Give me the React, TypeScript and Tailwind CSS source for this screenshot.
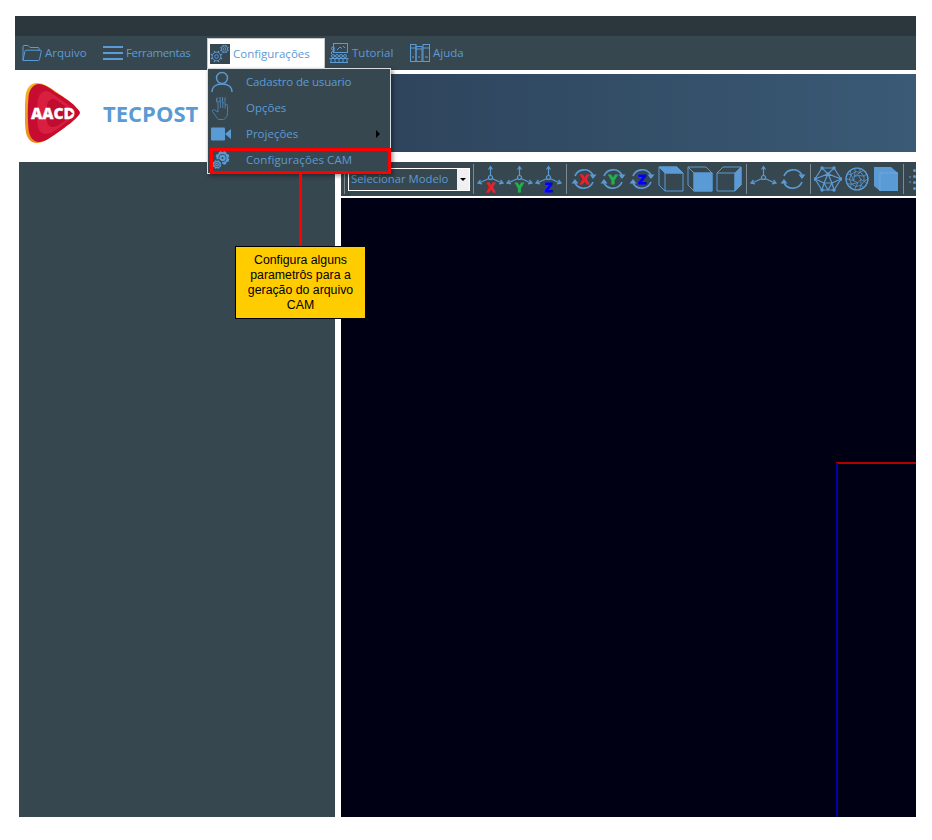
import React from 'react'

const BLUE = '#5b9bd5'
const PANEL = '#37474f'

function FolderIcon() {
  return (
    <svg width="20" height="18" viewBox="0 0 20 18" fill="none" stroke={BLUE} strokeWidth="1">
      <path d="M1 16.500V2.500q0-1 1-1h4l2 2h8q1 0 1 1v2" />
      <path d="M1 16.500l2-9.500q.2-.8 1-.8h14.500q1 0 .8 1l-1.800 8.300q-.2 1-1 1z" />
    </svg>
  )
}

function HamburgerIcon() {
  return (
    <svg width="20" height="16" viewBox="0 0 20 16" fill={BLUE}>
      <rect y="1" width="20" height="2" />
      <rect y="7" width="20" height="2" />
      <rect y="13" width="20" height="2" />
    </svg>
  )
}

function Gear({ cx, cy, r, sw = 1, fill = 'none', toothW = 1.6 }: { cx: number; cy: number; r: number; sw?: number; fill?: string; toothW?: number }) {
  const teeth = []
  for (let i = 0; i < 8; i++) {
    const a = (i * Math.PI) / 4 + Math.PI / 8
    teeth.push(
      <line key={i} x1={cx + Math.cos(a) * r} y1={cy + Math.sin(a) * r} x2={cx + Math.cos(a) * r * 1.38} y2={cy + Math.sin(a) * r * 1.38} stroke={BLUE} strokeWidth={toothW} />,
    )
  }
  return (
    <g>
      {teeth}
      <circle cx={cx} cy={cy} r={r} fill={fill} stroke={BLUE} strokeWidth={sw} />
      <circle cx={cx} cy={cy} r={r * 0.42} fill="none" stroke={BLUE} strokeWidth={sw} />
    </g>
  )
}

function TutorialIcon() {
  return (
    <svg width="20" height="20" viewBox="0 0 20 20" fill="none" stroke={BLUE} strokeWidth="1">
      <rect x="4.500" y="0.500" width="14" height="9" />
      <path d="M8 7l3-3 2 1.500M14 3l2 2" />
      <circle cx="4" cy="5.500" r="1.500" />
      <path d="M2.500 11V9l3.500-1.500M0.500 15.500h19M1 19.500h18" />
      <circle cx="4" cy="13" r="1.500" />
      <circle cx="8" cy="13" r="1.500" />
      <circle cx="12" cy="13" r="1.500" />
      <circle cx="16" cy="13" r="1.500" />
      <path d="M2 15.500v4M6 15.500v4M10 15.500v4M14 15.500v4M18 15.500v4" />
    </svg>
  )
}

function BooksIcon() {
  return (
    <svg width="20" height="18" viewBox="0 0 20 18" fill="none" stroke={BLUE} strokeWidth="1">
      <rect x="0.500" y="0.500" width="5.500" height="17" />
      <rect x="6" y="2.500" width="6" height="15" />
      <rect x="13" y="0.500" width="6.500" height="17" />
      <path d="M0.500 4h5.500M6 5h6M13 4h6.500M2 13h2M8 13h2M15 13h3" />
    </svg>
  )
}

function MenuItem({ icon, label, className }: { icon: React.ReactNode; label: string; className: string }) {
  return (
    <div className={'flex items-center h-[32px] pb-[2px] ' + className}>
      <div className="shrink-0 flex items-center">{icon}</div>
      <span className="ml-[3px] text-[11.5px] text-[#5b9bd5] whitespace-nowrap">{label}</span>
    </div>
  )
}

function Axes({ letter, color }: { letter?: string; color?: string }) {
  return (
    <svg width="27" height="32" viewBox="0 -2 27 32" fill="none" stroke={BLUE} strokeWidth="1.200">
      <path d="M13.500 11V2M12 13.500L2 18M15 13.500L25 18" />
      <circle cx="13.500" cy="12.500" r="2" />
      <path d="M11.500 4.500l2-3 2 3" />
      <path d="M3.500 15l-2.500 3 4 .8" />
      <path d="M23.500 15l2.500 3-4 .8" />
      {letter && (
        <text x="13.500" y="27" textAnchor="middle" fontSize="12.500" fontWeight="700" fontFamily="Liberation Sans, sans-serif" fill={color} stroke={color} strokeWidth="1.100">
          {letter}
        </text>
      )}
    </svg>
  )
}

function Rotate({ letter, color }: { letter?: string; color?: string }) {
  return (
    <svg width="26" height="26" viewBox="0 0 26 26" fill="none" stroke={BLUE} strokeWidth="1.600">
      <path d="M4 10A10 10 0 0 1 22 9" />
      <path d="M22 16A10 10 0 0 1 4 17" />
      <path d="M18.500 8.500h7l-3.500 4.500z" fill={BLUE} stroke="none" />
      <path d="M0.500 17.500h7L4 13z" fill={BLUE} stroke="none" />
      {letter && (
        <text x="13" y="18" textAnchor="middle" fontSize="13.500" fontWeight="700" fontFamily="Liberation Sans, sans-serif" fill={color} stroke={color} strokeWidth="1.100">
          {letter}
        </text>
      )}
    </svg>
  )
}

function Cube({ variant }: { variant: 'top' | 'front' | 'side' }) {
  if (variant === 'side') {
    return (
      <svg width="26" height="26" viewBox="0 0 26 26" fill="none" stroke={BLUE} strokeWidth="1">
        <path d="M19 7l6-6v18l-6 6z" fill={BLUE} />
        <path d="M1 7h18v18H1zM1 7l6-6h18v18l-6 6" />
      </svg>
    )
  }
  return (
    <svg width="26" height="26" viewBox="0 0 26 26" fill="none" stroke={BLUE} strokeWidth="1">
      {variant === 'top' && <path d="M1 1h18l6 6H7z" fill={BLUE} />}
      {variant === 'front' && <rect x="7" y="7" width="18" height="18" fill={BLUE} />}
      <path d="M1 1h18l6 6v18H7l-6-6z" />
      <path d="M1 1l6 6h18M7 7v18" />
    </svg>
  )
}

function WireMesh() {
  return (
    <svg width="28" height="26" viewBox="0 0 28 26" fill="none" stroke={BLUE} strokeWidth="1.200">
      <path d="M8 2h12l7 11-7 11H8L1 13z" />
      <path d="M8 2l6 6 6-6M1 13l13-5 13 5M1 13l9 4 4-9 4 9 9-4M10 17h8M10 17L8 24M18 17l2 7M10 17l4 7 4-7" />
      {[[8, 2], [20, 2], [27, 13], [20, 24], [8, 24], [1, 13], [14, 8]].map(([x, y], i) => (
        <circle key={i} cx={x} cy={y} r="1.700" fill={BLUE} stroke="none" />
      ))}
    </svg>
  )
}

function Sphere() {
  // rings of points joined to each other, reads as a geodesic ball at this size
  const rings = [
    { r: 11, n: 14, o: 0 },
    { r: 7.5, n: 9, o: 0.3 },
    { r: 3.800, n: 5, o: 0.1 },
  ]
  const pts = rings.map((g) =>
    Array.from({ length: g.n }, (_, i) => {
      const a = g.o + (i * 2 * Math.PI) / g.n
      return [12 + Math.cos(a) * g.r, 12 + Math.sin(a) * g.r]
    }),
  )
  let d = ''
  pts.forEach((ring, k) => {
    ring.forEach((p, i) => {
      const q = ring[(i + 1) % ring.length]
      d += `M${p[0]} ${p[1]}L${q[0]} ${q[1]}`
      if (k < pts.length - 1) {
        const next = pts[k + 1]
        const j = Math.floor((i * next.length) / ring.length)
        d += `M${p[0]} ${p[1]}L${next[j][0]} ${next[j][1]}`
      }
    })
  })
  return (
    <svg width="24" height="24" viewBox="0 0 24 24" fill="none" stroke={BLUE} strokeWidth="0.800">
      <circle cx="12" cy="12" r="11" strokeWidth="1.200" />
      <path d={d} />
    </svg>
  )
}

function SolidCube() {
  return (
    <svg width="26" height="26" viewBox="0 0 26 26" fill={BLUE}>
      <path d="M1 1h17l7 6v18H7l-6-5z" />
      <path d="M7 7h18M7 7v18" stroke="#6ea8dc" strokeWidth="1" fill="none" />
    </svg>
  )
}

function ToolSep() {
  return <div className="w-[1px] h-[30px] bg-[#7d8a90] ml-[3px] mr-[2px] shrink-0" />
}

function Tool({ children }: { children: React.ReactNode }) {
  return <div className="w-[29px] h-[34px] flex items-center justify-center shrink-0">{children}</div>
}

function Logo() {
  return (
    <svg width="56" height="61" viewBox="0 0 56 61">
      <defs>
        <linearGradient id="rim" x1="0" y1="0" x2="0" y2="1">
          <stop offset="0" stopColor="#f5b323" />
          <stop offset="1" stopColor="#ea8a1c" />
        </linearGradient>
      </defs>
      <path d="M12 0C5 0 1 6 .5 14c-1 11-1 22 0 32C1 54 5 60 12 60c5 0 12-4 20-10 10-7 18-13 21-17 2.500-2.500 2.500-4 0-6.500C48 20 40 15 30 8 24 3.500 17 0 12 0z" fill="url(#rim)" />
      <path d="M14 1C8 1 4 7 3.500 14c-1 11-1 22 0 32C4 53 8 59 14 59c5 0 11-4 18-9 10-7 18-13 21-17 2.500-2.500 2.500-4 0-6.500C48 20 40 15 30 9 25 5 19 1 14 1z" fill="#c60c30" />
      <path d="M21 8c-5 0-8 5-8.500 11-.5 8-.5 15 0 22 .5 6 3.500 10 8.500 10 4 0 9-3 14-7 7-5 12-9 14-12 1.500-1.500 1.500-3 0-4.500-3-4-9-8-15-12-4-3-9-7.500-13-7.500z" fill="#d81f3f" />
      <path d="M28 16c-4 0-6 4-6 8-.5 5-.5 9 0 13 0 4 2 7 6 7 3 0 6-2 10-5 4-3 7-5 8-7 1-1 1-2 0-3-2-3-5-5-9-8-3-2-6-5-9-5z" fill="#c00c2e" />
      <text x="28" y="36" textAnchor="middle" fontSize="15.500" fontWeight="800" fontFamily="Open Sans, sans-serif" fill="#fff" stroke="#fff" strokeWidth="0.300">
        AACD
      </text>
      <path d="M43.500 27.500l4.500 3-4.500 3z" fill="#c60c30" />
    </svg>
  )
}

function HandIcon() {
  return (
    <svg width="20" height="25" viewBox="0 0 20 25" fill="none" stroke={BLUE} strokeWidth="0.900" opacity="0.75">
      <path d="M7 16V6.500a1.200 1.200 0 0 1 2.400 0V12m0-5.500a1.200 1.200 0 0 1 2.400 0V12m0-4.500a1.200 1.200 0 0 1 2.400 0V12.500m0-3a1.200 1.200 0 0 1 2.400 0v7c0 4-2.500 7-5 7H9c-2 0-3-1-4-3l-3.500-5c-.8-1.200 1-2.500 2-1.500L7 16" />
      <path d="M6.500 1.500a4 4 0 0 0 0 5M9 1v4M11.500 1v4M14 1.500v4" strokeWidth="1.100" />
    </svg>
  )
}

function DropRow({ icon, label, arrow, textClass }: { icon: React.ReactNode; label: string; arrow?: boolean; textClass?: string }) {
  return (
    <div className="flex items-center h-[26px] relative">
      <div className="w-[38px] pl-[3px] flex items-center shrink-0">{icon}</div>
      <span className={'text-[11.5px] text-[#5b9bd5] whitespace-nowrap ' + (textClass ?? '')}>{label}</span>
      {arrow && <div className="absolute right-[10px] top-[9px] w-0 h-0 border-y-[4px] border-y-transparent border-l-[4px] border-l-black" />}
    </div>
  )
}

export default function App() {
  return (
    <div className="w-[932px] h-[840px] bg-white pt-[16px] pl-[15px] relative overflow-hidden font-['Open_Sans',sans-serif]">
      <div className="w-[901px] h-[801px] flex flex-col">
        <div className="h-[20px] bg-[#2b373c] shrink-0" />
        <div className="h-[34px] bg-[#37474f] shrink-0 flex items-end pl-[7px]">
          <MenuItem className="w-[81px]" icon={<FolderIcon />} label="Arquivo" />
          <MenuItem className="w-[104px] tracking-[-0.35px]" icon={<HamburgerIcon />} label="Ferramentas" />
          <MenuItem
            className="w-[118px] bg-white border-t border-l border-r border-[#c8c8c8] pl-[2px] mr-[4px]"
            label="Configurações"
            icon={
              <div className="w-[20px] h-[20px] bg-[#37474f]">
                <svg width="20" height="20" viewBox="0 0 20 20">
                  <Gear cx={6.500} cy={12.500} r={4.300} sw={0.900} toothW={1.400} />
                  <Gear cx={14.500} cy={5} r={3.200} sw={0.900} toothW={1.400} />
                </svg>
              </div>
            }
          />
          <MenuItem className="w-[81px]" icon={<TutorialIcon />} label="Tutorial" />
          <MenuItem className="" icon={<BooksIcon />} label="Ajuda" />
        </div>

        <div className="h-[92px] shrink-0 flex">
          <div className="w-[192px] shrink-0 flex items-center pl-[10px] pb-[6px]">
            <Logo />
            <span className="ml-[22px] text-[22px] font-bold text-[#5b9bd5] whitespace-nowrap">TECPOST</span>
          </div>
          <div className="flex-1 mt-[4px] h-[78px] bg-gradient-to-r from-[#2a3d54] to-[#3a5a75]" />
        </div>

        <div className="flex-1 flex min-h-0 pl-[4px]">
          <div className="w-[316px] bg-[#37474f] shrink-0" />
          <div className="w-[6px] shrink-0" />
          <div className="flex-1 flex flex-col">
            <div className="h-[34px] bg-[#37474f] shrink-0 flex items-center">
              <div className="w-[1px] h-[30px] bg-[#7d8a90] ml-[3px] mr-[3px] shrink-0" />
              <div className="w-[122px] h-[23px] border border-white flex items-center shrink-0 relative">
                <span className="text-[11.3px] text-[#5b9bd5] pl-[2px] whitespace-nowrap">Selecionar Modelo</span>
                <div className="absolute right-0 top-0 bottom-0 w-[12px] bg-[#f0f0f0] flex items-center justify-center">
                  <div className="w-0 h-0 border-x-[3px] border-x-transparent border-t-[3px] border-t-black" />
                </div>
              </div>
              <ToolSep />
              <Tool><Axes letter="X" color="#ee1c25" /></Tool>
              <Tool><Axes letter="Y" color="#22b14c" /></Tool>
              <Tool><Axes letter="Z" color="#0000ff" /></Tool>
              <ToolSep />
              <Tool><Rotate letter="X" color="#ee1c25" /></Tool>
              <Tool><Rotate letter="Y" color="#22b14c" /></Tool>
              <Tool><Rotate letter="Z" color="#0000ff" /></Tool>
              <Tool><Cube variant="top" /></Tool>
              <Tool><Cube variant="front" /></Tool>
              <Tool><Cube variant="side" /></Tool>
              <ToolSep />
              <Tool><Axes /></Tool>
              <Tool><Rotate /></Tool>
              <ToolSep />
              <Tool><WireMesh /></Tool>
              <Tool><Sphere /></Tool>
              <Tool><SolidCube /></Tool>
              <ToolSep />
              <div className="ml-[3px] flex gap-[1px] items-center">
                <div className="flex flex-col gap-[3px]">
                  <div className="w-[2px] h-[2px] rounded-full bg-[#5b9bd5] opacity-70" />
                  <div className="w-[2px] h-[2px] rounded-full bg-[#5b9bd5] opacity-70" />
                </div>
                <div className="flex flex-col gap-[3px] ml-[1px]">
                  <div className="w-[3px] h-[3px] rounded-full bg-[#5b9bd5]" />
                  <div className="w-[3px] h-[3px] rounded-full bg-[#5b9bd5]" />
                  <div className="w-[3px] h-[3px] rounded-full bg-[#5b9bd5]" />
                  <div className="w-[3px] h-[3px] rounded-full bg-[#5b9bd5]" />
                </div>
              </div>
            </div>
            <div className="mt-[2px] flex-1 bg-[#000014] relative">
              <div className="absolute left-[495px] top-[264px] right-0 h-[2px] bg-[#b00000]" />
              <div className="absolute left-[495px] top-[265px] bottom-0 w-[2px] bg-[#0000a8]" />
            </div>
          </div>
        </div>
      </div>

      {/* dropdown */}
      <div className="absolute left-[207px] top-[68px] w-[184px] h-[106px] bg-[#37474f] border border-[#d8dcde] shadow-[2px_2px_4px_rgba(0,0,0,0.4)]">
        <DropRow
          label="Cadastro de usuario"
          textClass="tracking-[-0.15px]"
          icon={
            <svg width="22" height="22" viewBox="0 0 22 22" fill="none" stroke={BLUE} strokeWidth="1.400">
              <circle cx="11" cy="7" r="5.500" />
              <path d="M1 21c0-5 4-8 10-8s10 3 10 8" />
            </svg>
          }
        />
        <DropRow label="Opções" icon={<HandIcon />} />
        <DropRow
          label="Projeções"
          arrow
          icon={
            <svg width="20" height="14" viewBox="0 0 20 14" fill={BLUE}>
              <rect width="14" height="13" y="0.500" rx="1" />
              <path d="M14 7l6-5v10z" />
            </svg>
          }
        />
        <DropRow
          label="Configurações CAM"
          textClass="tracking-[0.1px]"
          icon={
            <svg width="20" height="22" viewBox="0 0 20 22">
              <Gear cx={11.500} cy={9} r={5} sw={2.200} toothW={2.800} />
              <circle cx={6} cy={15.500} r={5.500} fill={PANEL} />
              <Gear cx={6} cy={15.500} r={3.200} sw={1.200} toothW={1.400} />
            </svg>
          }
        />
      </div>

      {/* callout */}
      <div className="absolute left-[210px] top-[148px] w-[181px] h-[26px] border-[3px] border-[#ff0000]" />
      <div className="absolute left-[299px] top-[174px] w-[3px] h-[72px] bg-[#ff0000]" />
      <div className="absolute left-[235px] top-[246px] w-[131px] h-[73px] bg-[#ffcc00] border border-black flex items-center justify-center text-center text-[12.3px] leading-[15px] text-black font-['Liberation_Sans',sans-serif]">
        <div>Configura alguns<br />parametrôs para a<br />geração do arquivo<br />CAM</div>
      </div>
    </div>
  )
}
